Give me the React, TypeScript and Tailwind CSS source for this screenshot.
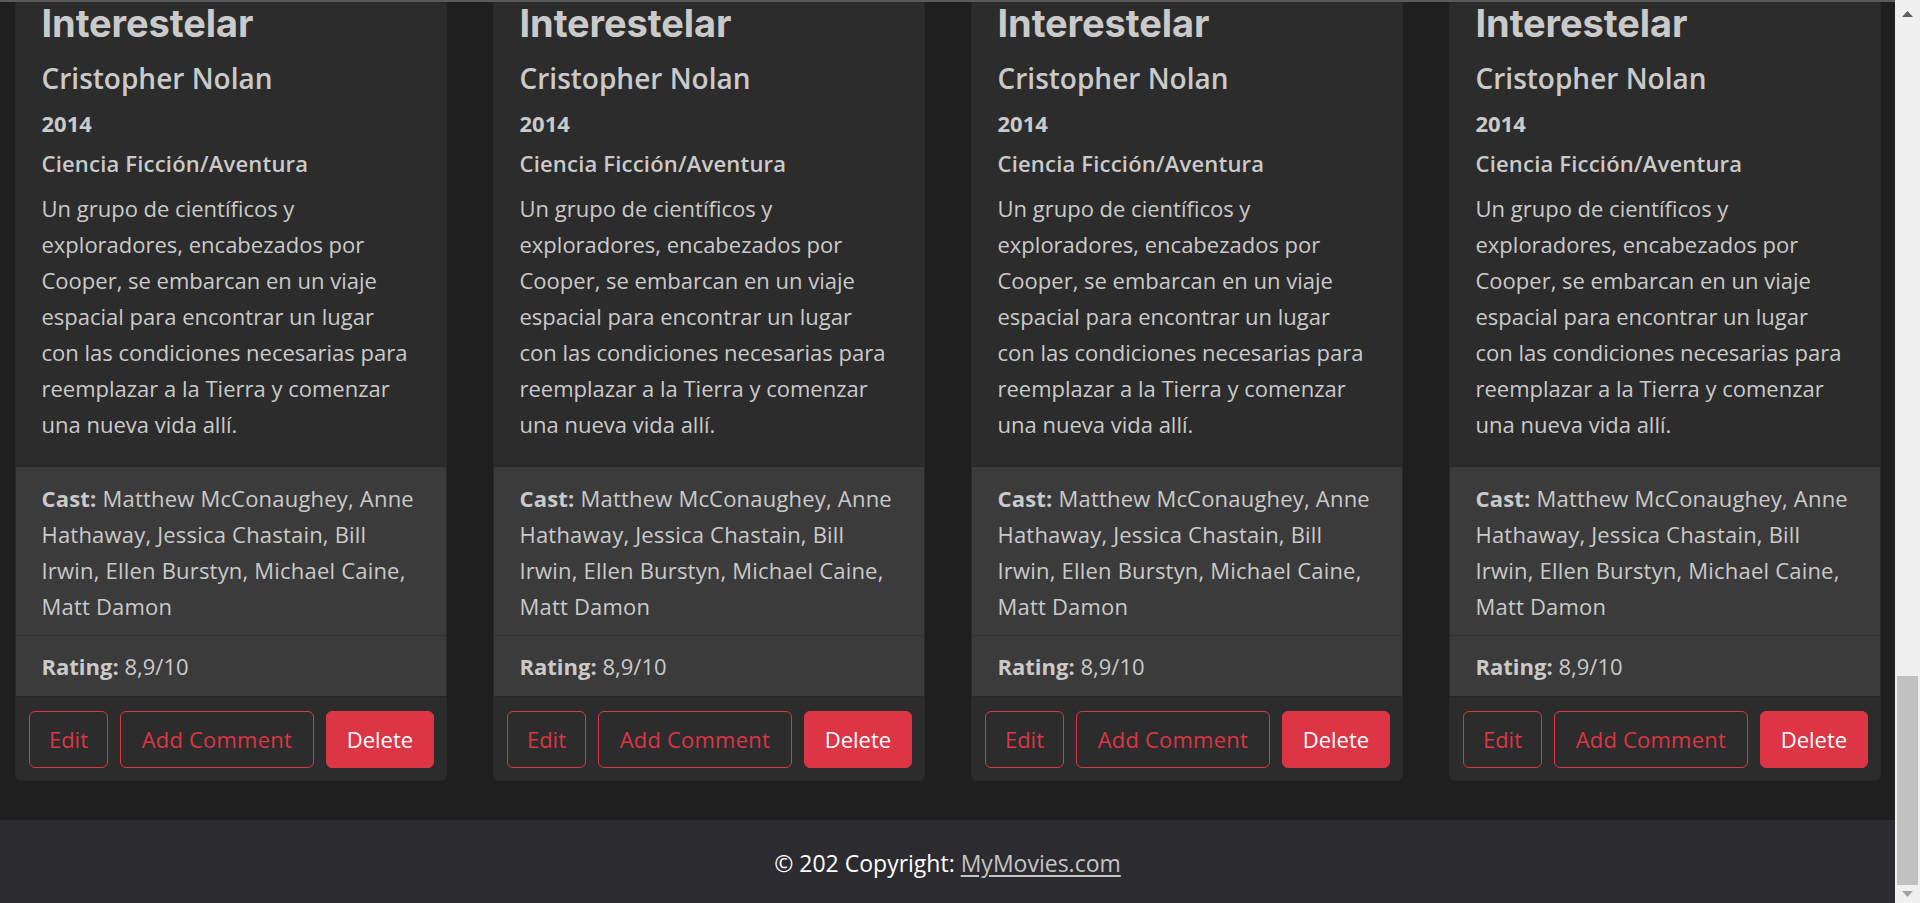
import React from "react";

const para = [
  "Un grupo de científicos y",
  "exploradores, encabezados por",
  "Cooper, se embarcan en un viaje",
  "espacial para encontrar un lugar",
  "con las condiciones necesarias para",
  "reemplazar a la Tierra y comenzar",
  "una nueva vida allí.",
];

const castRest = [
  "Hathaway, Jessica Chastain, Bill",
  "Irwin, Ellen Burstyn, Michael Caine,",
  "Matt Damon",
];

function Card() {
  return (
    <div className="flex flex-col bg-[#2c2c2c] border-x border-b border-[#282828] rounded-b-[6px] text-[#cacaca]">
      <div className="pl-[25.5px] pr-[23px] pb-[23.5px]">
        <h2 className="font-['Inter',sans-serif] font-bold text-[38px] leading-[43px] tracking-[-0.1px]">
          Interestelar
        </h2>
        <h5 className="mt-[15.4px] text-[28px] leading-[36px] font-semibold">Cristopher Nolan</h5>
        <h6 className="mt-[11.8px] text-[22px] leading-[30px] font-bold">2014</h6>
        <p className="mt-[10px] text-[22px] leading-[30px] font-semibold tracking-[0.2px]">
          Ciencia Ficción/Aventura
        </p>
        <p className="mt-[12px] text-[22px] leading-[36px] whitespace-nowrap">
          {para.map((l, i) => (
            <span key={i} className="block">
              {l}
            </span>
          ))}
        </p>
      </div>
      <ul className="bg-[#3b3b3b] border-t border-[#272727] text-[22px] leading-[36px] whitespace-nowrap">
        <li className="pl-[25.5px] pr-[20px] pt-[13.5px] pb-[10.8px]">
          <span className="block tracking-[0.2px]">
            <b className="font-bold">Cast:</b> Matthew McConaughey, Anne
          </span>
          {castRest.map((l, i) => (
            <span key={i} className="block tracking-[0.2px]">
              {l}
            </span>
          ))}
        </li>
        <li className="border-t border-[#333333] pl-[25.5px] pt-[12.5px] pb-[11.5px]">
          <b className="font-bold">Rating:</b> 8,9/10
        </li>
      </ul>
      <div className="flex gap-[12.3px] border-t border-[#262626] pl-[13.3px] pt-[14px] pb-[12px] text-[22px] leading-[36px]">
        <button className="w-[78.4px] h-[57px] rounded-[6px] border-[1.5px] border-[#dc3545] text-[#dc3545]">
          Edit
        </button>
        <button className="w-[193.7px] h-[57px] rounded-[6px] border-[1.5px] border-[#dc3545] text-[#dc3545] tracking-[0.2px]">
          Add Comment
        </button>
        <button className="w-[108px] h-[57px] rounded-[6px] border-[1.5px] border-[#dc3545] bg-[#dc3545] text-white">
          Delete
        </button>
      </div>
    </div>
  );
}

function Scrollbar() {
  return (
    <div className="w-[25px] h-full bg-[#f0f0f0] flex flex-col items-center">
      <div className="h-[27px] flex items-center justify-center">
        <svg width="11" height="6" viewBox="0 0 11 6">
          <polygon points="0,6 5.5,0 11,6" fill="#606060" />
        </svg>
      </div>
      <div className="flex-1 w-full flex flex-col justify-end px-[2px]">
        <div className="h-[209px] bg-[#c1c1c1]" />
      </div>
      <div className="h-[18px] flex items-center justify-center">
        <svg width="11" height="6" viewBox="0 0 11 6">
          <polygon points="0,0 11,0 5.5,6" fill="#a3a3a3" />
        </svg>
      </div>
    </div>
  );
}

export default function App() {
  return (
    <div className="w-[1920px] h-[903px] overflow-hidden flex bg-[#1f1f1f] font-['Open_Sans',sans-serif]">
      <div className="flex-1 flex flex-col">
        <div className="h-[2px] bg-[#5a5a5a]" />
        <div className="grid grid-cols-[repeat(4,432px)] gap-x-[46px] pl-[15px] pr-[14px] pb-[39px] items-start">
          <Card />
          <Card />
          <Card />
          <Card />
        </div>
        <footer className="flex-1 bg-[#2c2b30] text-center text-white text-[23px] leading-[36px] pt-[25px]">
          © 202 Copyright:{" "}
          <a className="text-[#c4c4c4] underline underline-offset-[3px]" href="#">
            MyMovies.com
          </a>
        </footer>
      </div>
      <Scrollbar />
    </div>
  );
}
